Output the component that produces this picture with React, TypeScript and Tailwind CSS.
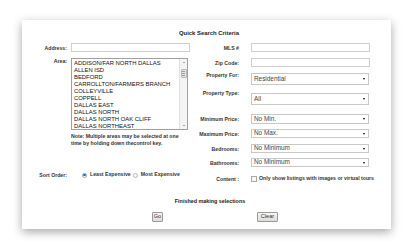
import React from 'react'

const areas = [
  'ADDISON/FAR NORTH DALLAS',
  'ALLEN ISD',
  'BEDFORD',
  'CARROLLTON/FARMERS BRANCH',
  'COLLEYVILLE',
  'COPPELL',
  'DALLAS EAST',
  'DALLAS NORTH',
  'DALLAS NORTH OAK CLIFF',
  'DALLAS NORTHEAST',
]

const Select = ({ value, h = 'h-[9px]' }: { value: string; h?: string }) => (
  <div className={`w-[118px] ${h} border border-[#c8c8c8] bg-white flex items-center justify-between pl-[2px] pr-[3px]`}>
    <span className="text-[6.4px] leading-none text-[#444]">{value}</span>
    <span className="w-0 h-0 border-l-[1.5px] border-r-[1.5px] border-t-[2px] border-l-transparent border-r-transparent border-t-black" />
  </div>
)

const Label = ({ children, w = 'w-[49px]' }: { children: React.ReactNode; w?: string }) => (
  <div className={`${w} shrink-0 text-right text-[5.2px] leading-[6px] font-bold text-[#333] whitespace-nowrap`}>{children}</div>
)

const Input = () => <div className="w-[119px] h-[9px] border border-[#cfcfcf] bg-white" />

export default function App() {
  return (
    <div className="w-[414px] h-[252px] bg-white overflow-hidden pt-[20px] pl-[22px]" style={{ fontFamily: '"Liberation Sans", Arial, sans-serif' }}>
      <div className="w-[369px] h-[209px] bg-white shadow-[0_3px_9px_rgba(0,0,0,0.35)] pt-[10px] flex flex-col">
        {/* title */}
        <div className="h-[6px] text-center pl-[5px] text-[5.9px] leading-[6px] font-bold text-[#222]">Quick Search Criteria</div>

        <div className="mt-[7px] h-[140px] flex">
          {/* left column */}
          <div className="w-[168px] shrink-0 flex flex-col">
            <div className="flex items-center gap-[4px] h-[9px]">
              <Label w="w-[45px]">Address:</Label>
              <Input />
            </div>
            <div className="mt-[6px] flex items-start gap-[4px]">
              <Label w="w-[45px]">Area:</Label>
              <div className="w-[117px] h-[72px] border border-[#a0a0a0] bg-white flex">
                <div className="flex-1 pl-[2px] pt-[1px] text-[5.9px] leading-[7px] text-[#111] whitespace-nowrap overflow-hidden">
                  {areas.map((a) => (
                    <div key={a}>{a}</div>
                  ))}
                </div>
                <div className="w-[8px] border-l border-[#e0e0e0] bg-[#f4f4f4] flex flex-col items-center">
                  <div className="h-[7px] w-full flex items-center justify-center">
                    <span className="w-0 h-0 border-l-[1px] border-r-[1px] border-b-[1.5px] border-l-transparent border-r-transparent border-b-[#555]" />
                  </div>
                  <div className="w-[6px] h-[9px] mt-[3px] border border-[#b8b8b8] bg-[#e6e6e6] rounded-[1px] flex flex-col items-center justify-center gap-[1px]">
                    <span className="w-[3px] h-px bg-[#999]" />
                    <span className="w-[3px] h-px bg-[#999]" />
                    <span className="w-[3px] h-px bg-[#999]" />
                  </div>
                  <div className="flex-1" />
                  <div className="h-[7px] w-full flex items-center justify-center">
                    <span className="w-0 h-0 border-l-[1px] border-r-[1px] border-t-[1.5px] border-l-transparent border-r-transparent border-t-[#555]" />
                  </div>
                </div>
              </div>
            </div>
            <div className="mt-[3px] ml-[49px] text-[5.2px] leading-[7px] font-bold text-[#333]">
              <div>Note: Multiple areas may be selected at one</div>
              <div>time by holding down thecontrol key.</div>
            </div>
            {/* sort order */}
            <div className="mt-[24px] h-[8px] flex items-center">
              <Label w="w-[45px]">Sort Order:</Label>
              <span className="ml-[15px] w-[5px] h-[5px] rounded-full border border-[#9aa] bg-white flex items-center justify-center">
                <span className="w-[2.5px] h-[2.5px] rounded-full bg-[#2a6fb0]" />
              </span>
              <span className="ml-[3px] text-[5.2px] font-bold text-[#333]">Least Expensive</span>
              <span className="ml-[2px] w-[5px] h-[5px] rounded-full border border-[#bbb] bg-[#f6f6f6]" />
              <span className="ml-[3px] text-[5.2px] font-bold text-[#333]">Most Expensive</span>
            </div>
          </div>

          {/* right column */}
          <div className="flex flex-col">
            <div className="flex items-center gap-[12px] h-[9px]">
              <Label>MLS #</Label>
              <Input />
            </div>
            <div className="mt-[6px] flex items-center gap-[12px] h-[9px]">
              <Label>Zip Code:</Label>
              <Input />
            </div>
            <div className="mt-[6px] flex items-start gap-[12px]">
              <div className="-mt-[1px]"><Label>Property For:</Label></div>
              <Select value="Residential" h="h-[12px]" />
            </div>
            <div className="mt-[8px] flex items-start gap-[12px]">
              <div className="-mt-[3px]"><Label>Property Type:</Label></div>
              <Select value="All" h="h-[12px]" />
            </div>
            <div className="mt-[9px] flex items-center gap-[12px]">
              <Label>Minimum Price:</Label>
              <Select value="No Min." h="h-[10px]" />
            </div>
            <div className="mt-[5px] flex items-center gap-[12px]">
              <Label>Maximum Price:</Label>
              <Select value="No Max." />
            </div>
            <div className="mt-[6px] flex items-center gap-[12px]">
              <Label>Bedrooms:</Label>
              <Select value="No Minimum" />
            </div>
            <div className="mt-[5px] flex items-center gap-[12px]">
              <Label>Bathrooms:</Label>
              <Select value="No Minimum" />
            </div>
            <div className="mt-[8px] h-[7px] flex items-center gap-[12px]">
              <Label>Content :</Label>
              <div className="flex items-center">
                <span className="w-[6px] h-[6px] border border-[#aaa] bg-[#f8f8f8]" />
                <span className="ml-[2px] text-[5.2px] font-bold text-[#333] whitespace-nowrap">Only show listings with images or virtual tours</span>
              </div>
            </div>
          </div>
        </div>

        <div className="mt-[15px] h-[6px] text-center pl-[7px] text-[5.4px] leading-[6px] font-bold text-[#222]">Finished making selections</div>

        <div className="mt-[8px] flex items-center">
          <button className="ml-[130px] w-[11px] h-[10px] border border-[#999] rounded-[1px] bg-gradient-to-b from-[#f6f6f6] to-[#dcdcdc] text-[5.6px] leading-none text-[#333] p-0">Go</button>
          <button className="ml-[94px] w-[21px] h-[10px] border border-[#999] rounded-[1px] bg-gradient-to-b from-[#f6f6f6] to-[#dcdcdc] text-[5.6px] leading-none text-[#333] p-0">Clear</button>
        </div>
      </div>
    </div>
  )
}
